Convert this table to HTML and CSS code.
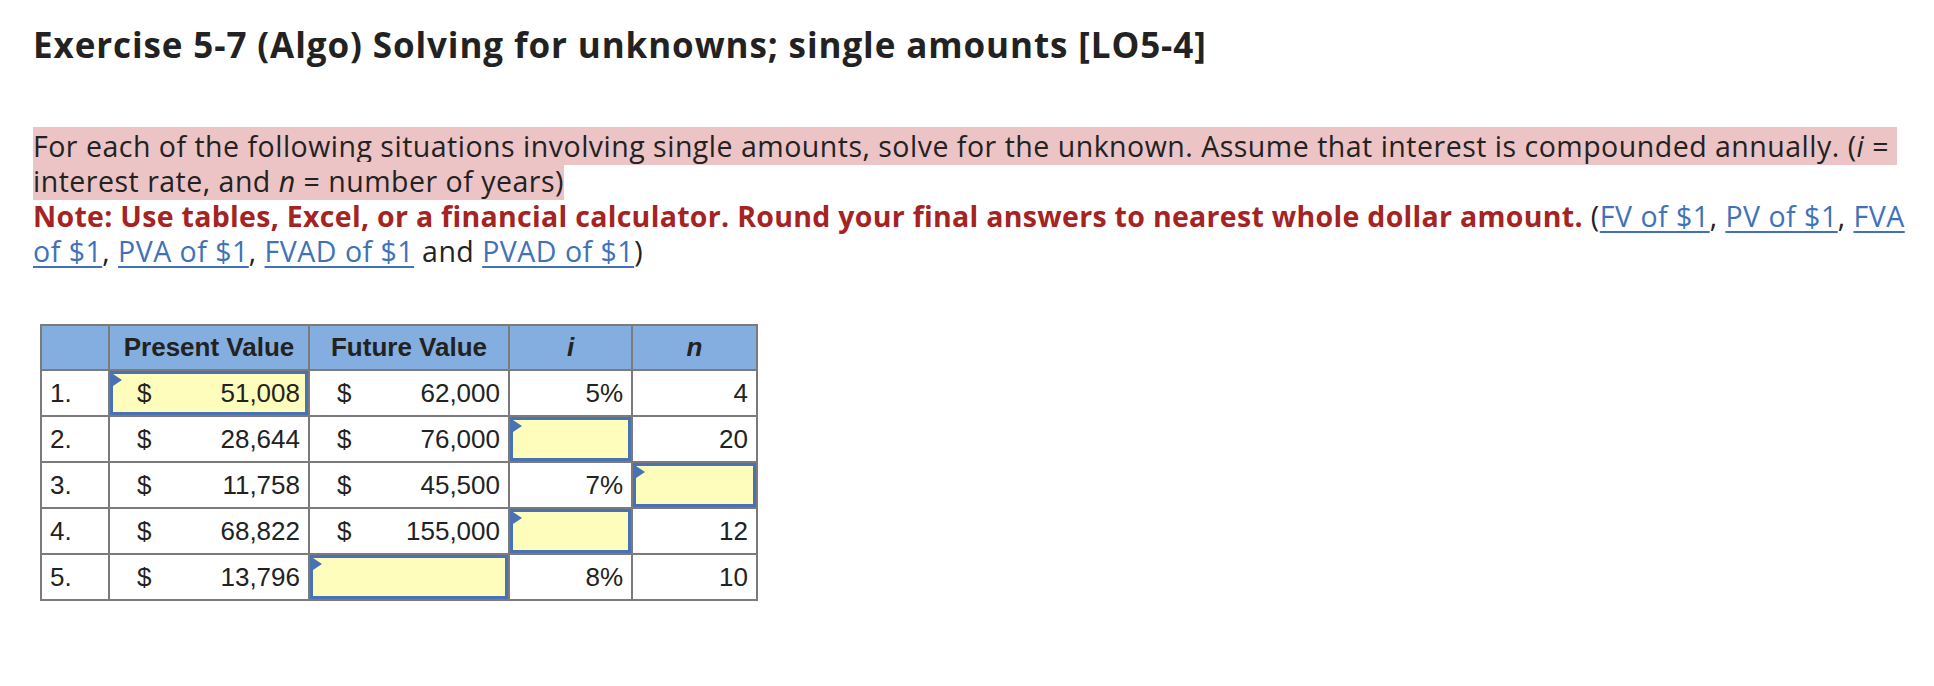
FILE: index.html
```html
<!DOCTYPE html>
<html>
<head>
<meta charset="utf-8">
<link rel="stylesheet" href="styles.css">
</head>
<body>
<div class="page">
  <h1 class="title">Exercise 5-7 (Algo) Solving for unknowns; single amounts [LO5-4]</h1>
  <p class="intro"><span class="hl">For each of the following situations involving single amounts, solve for the unknown. Assume that interest is compounded annually. (<i>i</i> =&nbsp;<br>interest rate, and <i>n</i> = number of years)</span><br><strong class="note">Note: Use tables, Excel, or a financial calculator. Round your final answers to nearest whole dollar amount.</strong> (<a href="#">FV of $1</a>, <a href="#">PV of $1</a>, <a href="#">FVA<br>of $1</a>, <a href="#">PVA of $1</a>, <a href="#">FVAD of $1</a> and <a href="#">PVAD of $1</a>)</p>

  <table class="grid">
    <colgroup>
      <col class="c-num">
      <col class="c-pv">
      <col class="c-fv">
      <col class="c-i">
      <col class="c-n">
    </colgroup>
    <thead>
      <tr>
        <th></th>
        <th>Present Value</th>
        <th>Future Value</th>
        <th><i>i</i></th>
        <th><i>n</i></th>
      </tr>
    </thead>
    <tbody>
      <tr>
        <td class="idx">1.</td>
        <td class="in"><div class="box money"><span>$</span><span>51,008</span></div></td>
        <td><div class="money"><span>$</span><span>62,000</span></div></td>
        <td class="r">5%</td>
        <td class="r">4</td>
      </tr>
      <tr>
        <td class="idx">2.</td>
        <td><div class="money"><span>$</span><span>28,644</span></div></td>
        <td><div class="money"><span>$</span><span>76,000</span></div></td>
        <td class="in"><div class="box"></div></td>
        <td class="r">20</td>
      </tr>
      <tr>
        <td class="idx">3.</td>
        <td><div class="money"><span>$</span><span>11,758</span></div></td>
        <td><div class="money"><span>$</span><span>45,500</span></div></td>
        <td class="r">7%</td>
        <td class="in"><div class="box"></div></td>
      </tr>
      <tr>
        <td class="idx">4.</td>
        <td><div class="money"><span>$</span><span>68,822</span></div></td>
        <td><div class="money"><span>$</span><span>155,000</span></div></td>
        <td class="in"><div class="box"></div></td>
        <td class="r">12</td>
      </tr>
      <tr>
        <td class="idx">5.</td>
        <td><div class="money"><span>$</span><span>13,796</span></div></td>
        <td class="in"><div class="box"></div></td>
        <td class="r">8%</td>
        <td class="r">10</td>
      </tr>
    </tbody>
  </table>
</div>
</body>
</html>
```

FILE: styles.css
```css
html, body {
  margin: 0;
  padding: 0;
  background: #ffffff;
}

.page {
  padding-left: 33px;
  color: #222222;
}

.title {
  font-family: "Open Sans", "Lato", sans-serif;
  font-weight: 700;
  font-size: 35px;
  line-height: 42px;
  letter-spacing: 0.9px;
  margin: 24px 0 0 0;
  color: #222222;
}

.intro {
  font-family: "Open Sans", "Lato", sans-serif;
  font-size: 28.5px;
  line-height: 34.7px;
  letter-spacing: 0.5px;
  margin: 63.4px 0 0 0;
  white-space: nowrap;
  color: #222222;
}

.hl {
  background: #ecc4c6;
}

.note {
  color: #a52323;
  font-weight: 700;
  letter-spacing: 0.3px;
}

.intro a {
  color: #3f72b8;
  text-decoration: underline;
  text-decoration-thickness: 2px;
  text-underline-offset: 4px;
}

.grid {
  margin: 56px 0 0 7px;
  border-collapse: collapse;
  table-layout: fixed;
  font-family: "Liberation Sans", Arial, sans-serif;
  font-size: 26px;
  color: #222222;
}

.c-num { width: 68px; }
.c-pv { width: 200px; }
.c-fv { width: 200px; }
.c-i { width: 123px; }
.c-n { width: 125px; }

.grid th,
.grid td {
  border: 2px solid #7b7b7b;
  padding: 0;
  vertical-align: middle;
}

.grid th {
  background: #84ade0;
  line-height: 43px;
  font-weight: 700;
  text-align: center;
}

.grid td {
  line-height: 44px;
}

.grid td.idx {
  padding-left: 8px;
}

.grid td.r {
  text-align: right;
  padding-right: 8px;
}

.money {
  display: flex;
  justify-content: space-between;
  align-items: center;
  height: 44px;
  padding: 0 8px 0 27px;
}

.box {
  position: relative;
  box-sizing: border-box;
  height: 44px;
  border: 3px solid #4872b4;
  background: #fffdbb;
}

.box.money {
  padding: 0 5px 0 24px;
}

.box::before {
  content: "";
  position: absolute;
  left: 0;
  top: 0;
  width: 0;
  height: 0;
  border-left: 9px solid #4872b4;
  border-top: 6.5px solid transparent;
  border-bottom: 6.5px solid transparent;
}
```
